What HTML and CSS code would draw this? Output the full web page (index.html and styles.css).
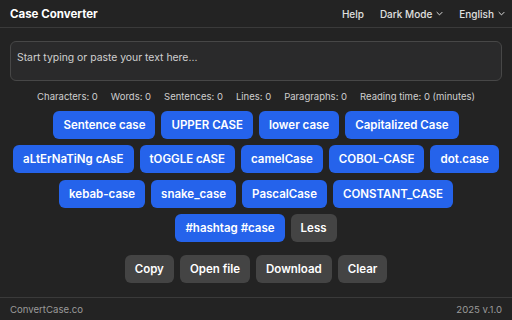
FILE: index.html
```html
<!DOCTYPE html>
<html>
  <head>
    <title>Case Converter</title>
    <meta name="viewport" content="width=device-width, initial-scale=1.0" />
    <link rel="stylesheet" href="styles.css">
  </head>
  <body>
    <header class="top-bar">
      <div class="brand">Case Converter</div>
      <nav class="nav">
        <span class="nav-item">Help</span>
        <span class="nav-item">Dark Mode<svg class="chevron" viewBox="0 0 10 6" width="7" height="5"><path d="M1 1l4 4 4-4" fill="none" stroke="currentColor" stroke-width="1.4"/></svg></span>
        <span class="nav-item">English<svg class="chevron" viewBox="0 0 10 6" width="7" height="5"><path d="M1 1l4 4 4-4" fill="none" stroke="currentColor" stroke-width="1.4"/></svg></span>
      </nav>
    </header>

    <main class="content">
      <textarea class="text-input" placeholder="Start typing or paste your text here..."></textarea>

      <div class="stats">
        <span>Characters: 0</span>
        <span>Words: 0</span>
        <span>Sentences: 0</span>
        <span>Lines: 0</span>
        <span>Paragraphs: 0</span>
        <span>Reading time: 0 (minutes)</span>
      </div>

      <div class="case-buttons">
        <div class="row">
          <button class="btn blue">Sentence case</button>
          <button class="btn blue">UPPER CASE</button>
          <button class="btn blue">lower case</button>
          <button class="btn blue">Capitalized Case</button>
        </div>
        <div class="row">
          <button class="btn blue">aLtErNaTiNg cAsE</button>
          <button class="btn blue">tOGGLE cASE</button>
          <button class="btn blue">camelCase</button>
          <button class="btn blue">COBOL-CASE</button>
          <button class="btn blue">dot.case</button>
        </div>
        <div class="row">
          <button class="btn blue">kebab-case</button>
          <button class="btn blue">snake_case</button>
          <button class="btn blue">PascalCase</button>
          <button class="btn blue">CONSTANT_CASE</button>
        </div>
        <div class="row">
          <button class="btn blue">#hashtag #case</button>
          <button class="btn grey">Less</button>
        </div>
      </div>

      <div class="actions">
        <button class="btn grey">Copy</button>
        <button class="btn grey">Open file</button>
        <button class="btn grey">Download</button>
        <button class="btn grey">Clear</button>
      </div>
    </main>

    <footer class="bottom-bar">
      <span>ConvertCase.co</span>
      <span>2025 v.1.0</span>
    </footer>
  </body>
</html>
```

FILE: styles.css
```css
body {
  margin: 0;
  background: #232323;
  color: #e6e6e6;
  height: 100vh;
  display: flex;
  flex-direction: column;
  font-family: Inter, "Noto Sans", sans-serif;
}

.top-bar {
  height: 28px;
  box-sizing: border-box;
  border-bottom: 1px solid #3a3a3a;
  display: flex;
  align-items: center;
  justify-content: space-between;
  padding: 0 7px 0 10px;
}

.brand {
  font-size: 11.5px;
  font-weight: 700;
  color: #ffffff;
}

.nav {
  display: flex;
  gap: 16px;
  font-size: 10px;
  font-weight: 500;
  color: #e0e0e0;
}

.nav-item {
  display: flex;
  align-items: center;
  gap: 4px;
}

.content {
  flex-grow: 1;
  padding: 13px 10px 0;
  display: flex;
  flex-direction: column;
  align-items: center;
}

.text-input {
  width: 100%;
  height: 40px;
  flex-shrink: 0;
  box-sizing: border-box;
  background: #2a2a2b;
  border: 1px solid #474747;
  border-radius: 6px;
  padding: 9px 6px;
  resize: none;
  font-family: inherit;
  font-size: 10.4px;
  color: #ddd;
  outline: none;
}

.text-input::placeholder {
  color: #d0d0d0;
}

.stats {
  margin-top: 10px;
  display: flex;
  gap: 13px;
  font-size: 9.5px;
  color: #cfcfcf;
}

.case-buttons {
  margin-top: 9px;
  display: flex;
  flex-direction: column;
  gap: 6.3px;
}

.row {
  display: flex;
  justify-content: center;
  gap: 6px;
}

.btn {
  height: 28px;
  padding: 0 10px;
  border: none;
  border-radius: 6px;
  font-family: inherit;
  font-size: 11.5px;
  font-weight: 600;
  color: #fff;
  white-space: nowrap;
  cursor: pointer;
}

.blue {
  background: #2563eb;
}

.grey {
  background: #444444;
}

.actions {
  margin-top: 13px;
  display: flex;
  gap: 6px;
}

.bottom-bar {
  height: 22px;
  border-top: 1px solid #3a3a3a;
  display: flex;
  align-items: center;
  justify-content: space-between;
  padding: 0 10px;
  font-size: 9.6px;
  color: #9a9a9a;
}
```
